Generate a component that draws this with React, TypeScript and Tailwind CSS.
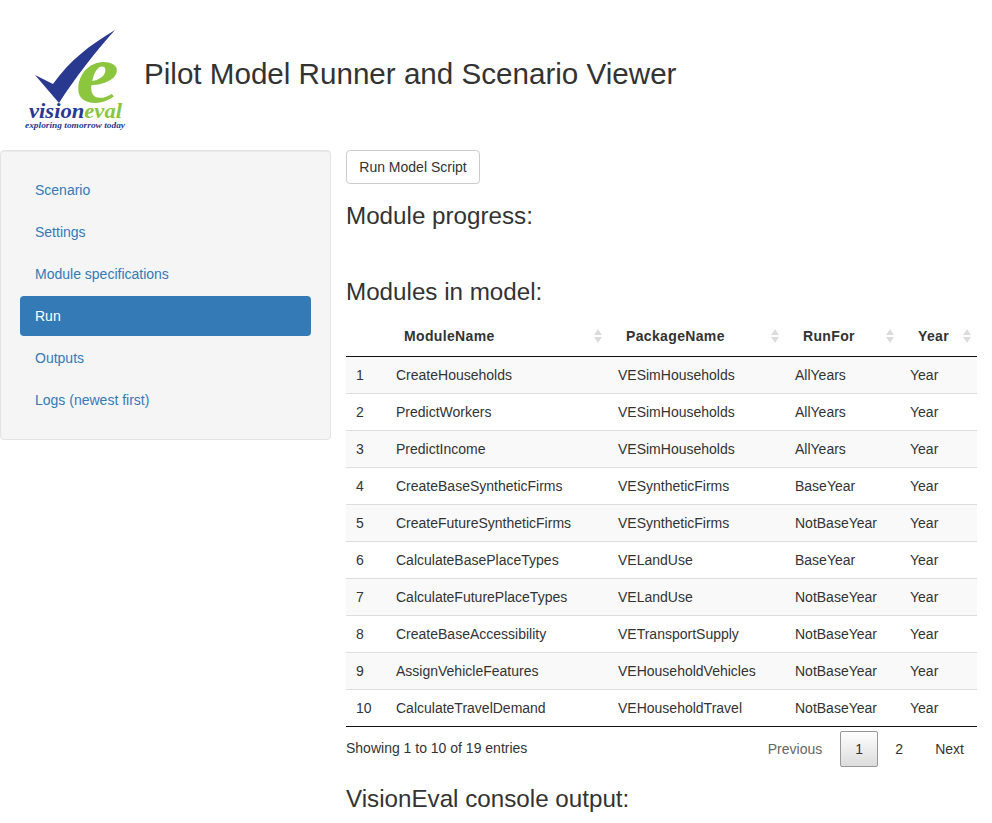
import React from "react";

const rows = [
  ["1", "CreateHouseholds", "VESimHouseholds", "AllYears", "Year"],
  ["2", "PredictWorkers", "VESimHouseholds", "AllYears", "Year"],
  ["3", "PredictIncome", "VESimHouseholds", "AllYears", "Year"],
  ["4", "CreateBaseSyntheticFirms", "VESyntheticFirms", "BaseYear", "Year"],
  ["5", "CreateFutureSyntheticFirms", "VESyntheticFirms", "NotBaseYear", "Year"],
  ["6", "CalculateBasePlaceTypes", "VELandUse", "BaseYear", "Year"],
  ["7", "CalculateFuturePlaceTypes", "VELandUse", "NotBaseYear", "Year"],
  ["8", "CreateBaseAccessibility", "VETransportSupply", "NotBaseYear", "Year"],
  ["9", "AssignVehicleFeatures", "VEHouseholdVehicles", "NotBaseYear", "Year"],
  ["10", "CalculateTravelDemand", "VEHouseholdTravel", "NotBaseYear", "Year"],
];

const navItems = ["Scenario", "Settings", "Module specifications", "Run", "Outputs", "Logs (newest first)"];

function Logo() {
  return (
    <svg width="110" height="110" viewBox="20 25 110 110" className="block">
      <path d="M35 75 L53 84 C70 60 90 45 115 30 C95 52 75 78 59 103 Z" fill="#2a3990" />
      <text x="76" y="102" textLength="43" lengthAdjust="spacingAndGlyphs" fontFamily="'Liberation Serif', serif" fontStyle="italic" fontWeight="700" fontSize="84" fill="#8cc63f">e</text>
      <text x="29" y="118" textLength="93" lengthAdjust="spacingAndGlyphs" fontFamily="'Liberation Serif', serif" fontStyle="italic" fontWeight="700" fontSize="20" fill="#2a3990">vision<tspan fill="#8cc63f">eval</tspan></text>
      <text x="25" y="128" textLength="100" lengthAdjust="spacingAndGlyphs" fontFamily="'Liberation Serif', serif" fontStyle="italic" fontWeight="700" fontSize="8.5" fill="#2a3990">exploring tomorrow today</text>
    </svg>
  );
}

function SortIcon() {
  return (
    <svg width="10" height="16" viewBox="0 0 10 16" className="absolute right-[5px] top-[8px]">
      <path d="M5 1 L9 7 L1 7 Z" fill="#dcdcdc" />
      <path d="M1 9 L9 9 L5 15 Z" fill="#dcdcdc" />
    </svg>
  );
}

export default function App() {
  return (
    <div className="w-[992px] h-[823px] overflow-hidden bg-white text-[14px] leading-[20px] text-[#333] font-['Liberation_Sans',Arial,sans-serif]">
      <div className="flex items-start h-[150px]">
        <div className="w-[144px] pl-[20px] pt-[25px] shrink-0"><Logo /></div>
        <h1 className="text-[29.6px] leading-[33px] pt-[57px]">Pilot Model Runner and Scenario Viewer</h1>
      </div>
      <div className="flex">
        <div className="w-[331px] h-[290px] shrink-0 bg-[#f5f5f5] border border-[#e3e3e3] rounded-[4px] p-[19px] shadow-[inset_0_1px_1px_rgba(0,0,0,0.05)]">
          <ul className="flex flex-col gap-[2px]">
            {navItems.map((n) => (
              <li key={n} className={n === "Run" ? "h-[40px] px-[15px] py-[10px] rounded-[4px] bg-[#337ab7] text-white" : "h-[40px] px-[15px] py-[10px] text-[#337ab7]"}>{n}</li>
            ))}
          </ul>
        </div>
        <div className="ml-[15px] w-[631px]">
          <button className="block h-[34px] w-[134px] bg-white border border-[#ccc] rounded-[4px] text-[#333]">Run Model Script</button>
          <h3 className="text-[24.2px] leading-[26px] mt-[19px]">Module progress:</h3>
          <h3 className="text-[24.2px] leading-[26px] mt-[50px]">Modules in model:</h3>
          <table className="w-[631px] table-fixed border-collapse mt-[15px]">
            <colgroup>
              <col className="w-[40px]" />
              <col className="w-[222px]" />
              <col className="w-[177px]" />
              <col className="w-[115px]" />
              <col className="w-[77px]" />
            </colgroup>
            <thead>
              <tr className="h-[36px] border-b border-[#111]">
                <th></th>
                {["ModuleName", "PackageName", "RunFor", "Year"].map((h) => (
                  <th key={h} className="relative text-left font-bold pl-[18px] pb-[4px] tracking-[0.35px]">{h}<SortIcon /></th>
                ))}
              </tr>
            </thead>
            <tbody>
              {rows.map((r, i) => (
                <tr key={r[0]} className={(i % 2 === 0 ? "bg-[#f9f9f9] " : "bg-white ") + (i === 9 ? "h-[37px] border-b border-[#111]" : "h-[37px] border-b border-[#ddd]")}>
                  {r.map((c, j) => (
                    <td key={j} className="px-[10px] whitespace-nowrap">{c}</td>
                  ))}
                </tr>
              ))}
            </tbody>
          </table>
          <div className="flex items-center justify-between h-[36px] mt-[4px]">
            <div className="pb-[2px]">Showing 1 to 10 of 19 entries</div>
            <div className="flex items-center pr-[13px]">
              <span className="text-[#666] mr-[18px]">Previous</span>
              <span className="w-[38px] h-[36px] flex items-center justify-center border border-[#979797] rounded-[2px] bg-gradient-to-b from-white to-[#dcdcdc]">1</span>
              <span className="w-[42px] text-center">2</span>
              <span className="ml-[15px]">Next</span>
            </div>
          </div>
          <h3 className="text-[24.2px] leading-[26px] mt-[19px]">VisionEval console output:</h3>
        </div>
      </div>
    </div>
  );
}
